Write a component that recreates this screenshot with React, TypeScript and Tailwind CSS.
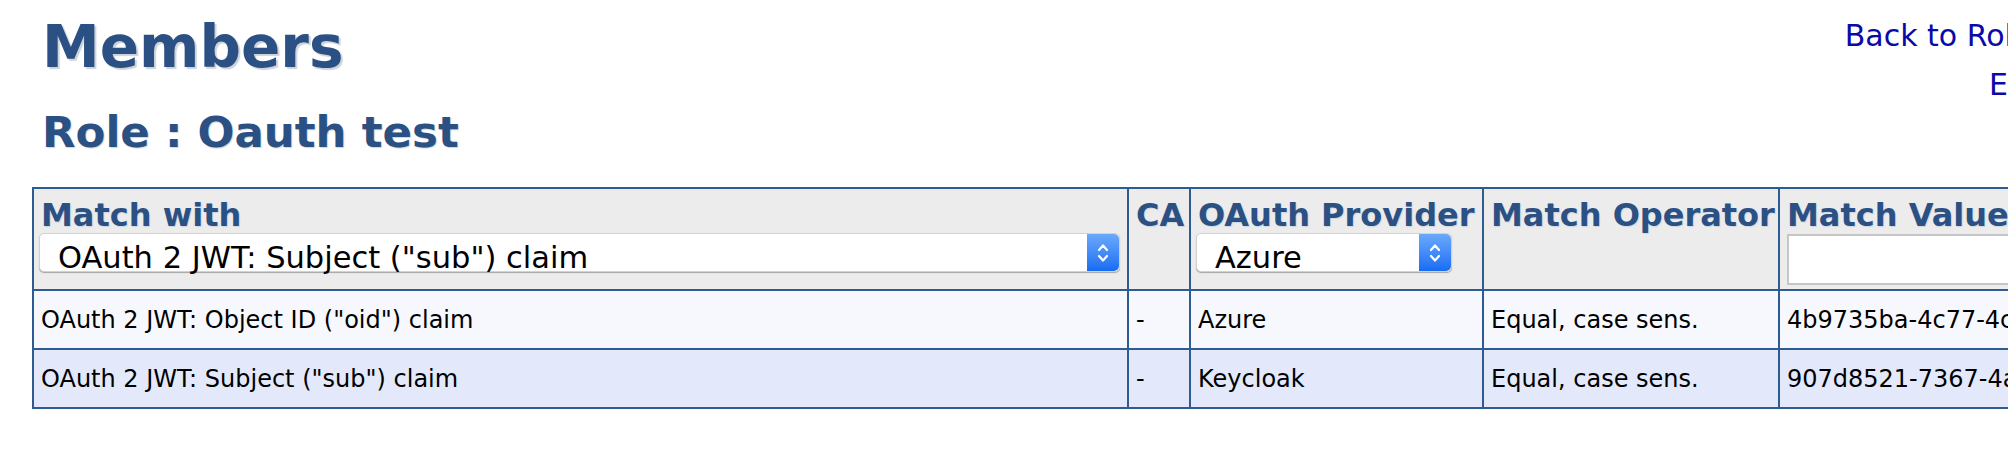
const font = "font-['DejaVu_Sans',Verdana,sans-serif]";

function Stepper() {
  return (
    <span className="flex w-[32px] shrink-0 items-center justify-center rounded-r-[5px] bg-gradient-to-b from-[#6aa9fb] to-[#176cf3]">
      <svg width="14" height="26" viewBox="0 0 14 26" fill="none" stroke="white" strokeWidth="2.2" strokeLinecap="round" strokeLinejoin="round">
        <path d="M3 10 L7 5.5 L11 10" />
        <path d="M3 16 L7 20.5 L11 16" />
      </svg>
    </span>
  );
}

function FakeSelect({ value, width }: { value: string; width: string }) {
  return (
    <div className={`-ml-[2px] flex h-[39px] ${width} rounded-[5px] border border-[#d2d2d2] bg-white shadow-[0_1px_1px_rgba(0,0,0,0.3)]`}>
      <span className="flex-1 whitespace-nowrap pl-[18px] text-[30.5px] leading-[47px] text-black">{value}</span>
      <Stepper />
    </div>
  );
}

const headCell = "bg-[#ececec] px-[7px] pt-[8px]";
const headText = "text-[32px] leading-[36px] font-bold text-[#2b5083] whitespace-nowrap [text-shadow:1px_1px_1px_#cfd6df]";
const bodyCell = "flex items-center px-[7px] text-[24px] text-black whitespace-nowrap overflow-hidden";

const rows = [
  { match: 'OAuth 2 JWT: Object ID ("oid") claim', ca: "-", provider: "Azure", op: "Equal, case sens.", value: "4b9735ba-4c77-4cd2-8f1a-2e6b9c0d7f31", bg: "bg-[#f6f8fd]" },
  { match: 'OAuth 2 JWT: Subject ("sub") claim', ca: "-", provider: "Keycloak", op: "Equal, case sens.", value: "907d8521-7367-4a9e-b3c5-51f0d2e8a6c4", bg: "bg-[#e3e9fb]" },
];

export default function App() {
  return (
    <div className={`h-[454px] w-[2008px] overflow-hidden bg-white ${font}`}>
      <div className="w-[2050px]">
        <div className="flex justify-between">
          <div className="pl-[42px]">
            <h1 className="mt-[19px] text-[58px] leading-[57px] font-bold text-[#2b5083] [text-shadow:2px_2px_1px_#cdd3da]">Members</h1>
            <h2 className="mt-[35px] text-[43.5px] leading-[43px] font-bold text-[#2b5083] [text-shadow:1px_1px_1px_#cdd3da]">Role : Oauth test</h2>
          </div>
          <div className="mt-[11px] flex flex-col items-end pr-[3px] text-[30px] leading-[49px] text-[#0a0aa8]">
            <a className="whitespace-nowrap">Back to Roles</a>
            <a className="whitespace-nowrap">Edit</a>
          </div>
        </div>

        <div className="ml-[32px] mt-[33px] grid w-fit grid-cols-[1093px_60px_291px_294px_320px] grid-rows-[100px_57px_57px] gap-[2px] bg-[#2e5b91] p-[2px]">
          <div className={headCell}>
            <div className={headText}>Match with</div>
            <FakeSelect value={'OAuth 2 JWT: Subject ("sub") claim'} width="w-[1081px]" />
          </div>
          <div className={headCell}>
            <div className={headText}>CA</div>
          </div>
          <div className={headCell}>
            <div className={headText}>OAuth Provider</div>
            <FakeSelect value="Azure" width="w-[256px]" />
          </div>
          <div className={headCell}>
            <div className={headText}>Match Operator</div>
          </div>
          <div className={headCell}>
            <div className={headText}>Match Value</div>
            <div className="mt-[1px] h-[51px] w-[300px] border-2 border-[#c6c6c6] bg-white" />
          </div>

          {rows.map((r) => (
            <>
              <div className={`${bodyCell} ${r.bg}`}>{r.match}</div>
              <div className={`${bodyCell} ${r.bg}`}>{r.ca}</div>
              <div className={`${bodyCell} ${r.bg}`}>{r.provider}</div>
              <div className={`${bodyCell} ${r.bg}`}>{r.op}</div>
              <div className={`${bodyCell} ${r.bg}`}>{r.value}</div>
            </>
          ))}
        </div>
      </div>
    </div>
  );
}
